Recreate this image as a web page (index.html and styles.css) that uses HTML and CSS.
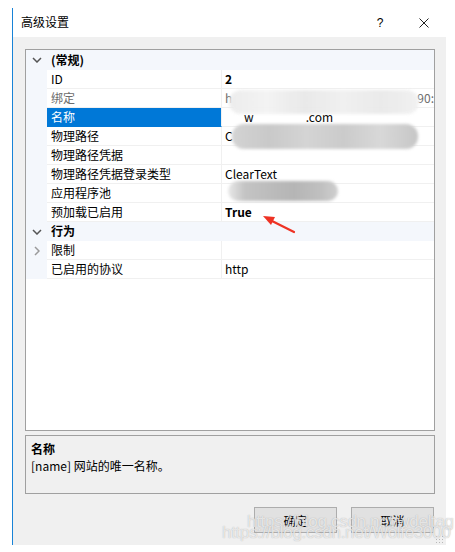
FILE: index.html
```html
<!DOCTYPE html>
<html lang="zh">
<head>
<meta charset="utf-8">
<link rel="stylesheet" href="styles.css">
</head>
<body>
<div class="window">
  <div class="titlebar">
    <div class="title">高级设置</div>
    <div class="tbtn help">?</div>
    <div class="tbtn close"><svg width="10" height="10" viewBox="0 0 10 10"><path d="M0.5 0.5 L9.5 9.5 M9.5 0.5 L0.5 9.5" stroke="#222" stroke-width="1" fill="none"/></svg></div>
  </div>
  <div class="content">
    <div class="grid">
      <div class="row cat first">
        <div class="gut"><svg width="10" height="6" viewBox="0 0 10 6"><path d="M1 1 L5 5 L9 1" stroke="#555" stroke-width="1.5" fill="none"/></svg></div>
        <div class="catname">(常规)</div>
      </div>
      <div class="row"><div class="gut"></div><div class="name">ID</div><div class="val bold">2</div></div>
      <div class="row"><div class="gut"></div><div class="name dis">绑定</div><div class="val dis">h<span class="tail">90:</span></div></div>
      <div class="row"><div class="gut"></div><div class="name sel">名称</div><div class="val"><span class="w">w</span><span class="com">.com</span></div></div>
      <div class="row"><div class="gut"></div><div class="name">物理路径</div><div class="val">C</div></div>
      <div class="row"><div class="gut"></div><div class="name">物理路径凭据</div><div class="val"></div></div>
      <div class="row"><div class="gut"></div><div class="name">物理路径凭据登录类型</div><div class="val">ClearText</div></div>
      <div class="row"><div class="gut"></div><div class="name">应用程序池</div><div class="val"></div></div>
      <div class="row"><div class="gut"></div><div class="name">预加载已启用</div><div class="val bold">True</div></div>
      <div class="row cat">
        <div class="gut"><svg width="10" height="6" viewBox="0 0 10 6"><path d="M1 1 L5 5 L9 1" stroke="#555" stroke-width="1.5" fill="none"/></svg></div>
        <div class="catname">行为</div>
      </div>
      <div class="row"><div class="gut"><svg width="6" height="10" viewBox="0 0 6 10"><path d="M1 1 L5 5 L1 9" stroke="#9a9a9a" stroke-width="1.5" fill="none"/></svg></div><div class="name">限制</div><div class="val"></div></div>
      <div class="row"><div class="gut"></div><div class="name">已启用的协议</div><div class="val">http</div></div>
    </div>
    <div class="desc">
      <div class="dtitle">名称</div>
      <div class="dtext">[name] 网站的唯一名称。</div>
    </div>
    <div class="buttons">
      <div class="btn">确定</div>
      <div class="btn">取消</div>
    </div>
  </div>
  <div class="grip"></div>
</div>

<div class="blob blob1"></div>
<div class="blob blob2"></div>
<div class="blob blob3"></div>

<svg class="arrow" width="40" height="24" viewBox="0 0 40 24">
  <path d="M34 19 L12 8" stroke="#ee3224" stroke-width="2.2" fill="none" stroke-linecap="round"/>
  <path d="M3 3 L15 4 L11 12 Z" fill="#ee3224"/>
</svg>

<div class="wm wm1">https://blog.csdn.net/wdeltag</div>
<div class="wm wm2">https://blog.csdn.net/Wolfe3000</div>
</body>
</html>
```

FILE: styles.css
```css
html, body {
  margin: 0;
  padding: 0;
  background: #ffffff;
}
body {
  width: 455px;
  height: 552px;
  position: relative;
  overflow: hidden;
  font-family: "Noto Sans CJK SC", "Noto Sans", sans-serif;
  font-size: 12px;
  color: #000;
}
.window {
  margin: 8px 0 0 12px;
  width: 434px;
  height: 537px;
  border-left: 1px solid #1883d7;
  box-sizing: border-box;
  display: flex;
  flex-direction: column;
  position: relative;
}
.titlebar {
  height: 29px;
  background: #fff;
  display: flex;
  align-items: center;
  padding-left: 8px;
}
.title {
  flex: 1;
  font-size: 12px;
  line-height: 16px;
  padding-bottom: 1px;
}
.tbtn {
  width: 44px;
  height: 29px;
  display: flex;
  align-items: center;
  justify-content: center;
}
.help {
  font-family: "Liberation Sans", sans-serif;
  font-size: 12px;
}
.close svg {
  margin-top: 1px;
}
.content {
  flex: 1;
  background: #f0f0f0;
  padding: 12px 11px 12px 12px;
  display: flex;
  flex-direction: column;
}
.grid {
  height: 382px;
  box-sizing: border-box;
  border: 1px solid #a0a0a0;
  background: #ffffff;
  display: flex;
  flex-direction: column;
}
.row {
  display: grid;
  grid-template-columns: 21px 175px 1fr;
  height: 19px;
  line-height: 18px;
}
.row.first {
  height: 20px;
  line-height: 19px;
}
.gut {
  background: #f4f7fc;
  display: flex;
  align-items: center;
  justify-content: center;
}
.cat {
  background: #f4f7fc;
  grid-template-columns: 21px 1fr;
}
.catname {
  font-weight: bold;
  padding-left: 4px;
}
.name {
  padding-left: 4px;
  border-right: 1px solid #f0f0f0;
  border-bottom: 1px solid #f0f0f0;
  white-space: nowrap;
  overflow: hidden;
}
.name.sel {
  background: #0078d7;
  color: #fff;
  border-bottom-color: #0078d7;
}
.val {
  padding-left: 3px;
  border-bottom: 1px solid #f0f0f0;
  white-space: nowrap;
  overflow: hidden;
  position: relative;
}
.dis {
  color: #6d6d6d;
}
.bold {
  font-weight: bold;
}
.tail {
  position: absolute;
  right: 0;
}
.w {
  margin-left: 19px;
}
.com {
  margin-left: 52px;
}
.desc {
  margin-top: 4px;
  height: 59px;
  box-sizing: border-box;
  border: 1px solid #a0a0a0;
  padding: 4px 5px;
}
.dtitle {
  font-weight: bold;
  line-height: 17px;
}
.dtext {
  line-height: 17px;
}
.buttons {
  margin-top: 13px;
  display: flex;
  justify-content: flex-end;
  gap: 14px;
  padding-right: 1px;
}
.btn {
  width: 83px;
  height: 26px;
  box-sizing: border-box;
  background: #e1e1e1;
  border: 1px solid #adadad;
  display: flex;
  align-items: center;
  justify-content: center;
}
.grip {
  position: absolute;
  right: 3px;
  bottom: 2px;
  width: 8px;
  height: 8px;
  background-image: radial-gradient(circle, #b8b8b8 0.8px, transparent 1px);
  background-size: 3px 3px;
}
.blob {
  position: absolute;
  border-radius: 12px;
  filter: blur(1.5px);
}
.blob1 {
  left: 229px;
  top: 90px;
  width: 190px;
  height: 24px;
  background: linear-gradient(90deg, #ececec, #f3f3f3 20%, #e8e8e8 40%, #f0f0f0 60%, #e9e9e9 80%, #f1f1f1);
  opacity: 0.95;
}
.blob2 {
  left: 232px;
  top: 124px;
  width: 186px;
  height: 25px;
  background: linear-gradient(90deg, #d3d3d3, #c9c9c9 20%, #d4d4d4 40%, #cbcbcb 60%, #d8d8d8 80%, #c6c6c6);
}
.blob3 {
  left: 228px;
  top: 181px;
  width: 110px;
  height: 20px;
  background: linear-gradient(90deg, #e8e8e8, #c4c4c4 15%, #bbbbbb 40%, #b5b5b5 60%, #c0c0c0 85%, #cfcfcf);
}
.arrow {
  position: absolute;
  left: 260px;
  top: 213px;
}
.wm {
  position: absolute;
  font-family: "Liberation Sans", sans-serif;
  font-size: 17px;
  color: rgba(255, 255, 255, 0.7);
  text-shadow: 0 0 1px rgba(120, 120, 120, 0.6);
  white-space: nowrap;
  letter-spacing: -0.3px;
}
.wm1 {
  left: 247px;
  top: 512px;
}
.wm2 {
  left: 222px;
  top: 523px;
}
```
